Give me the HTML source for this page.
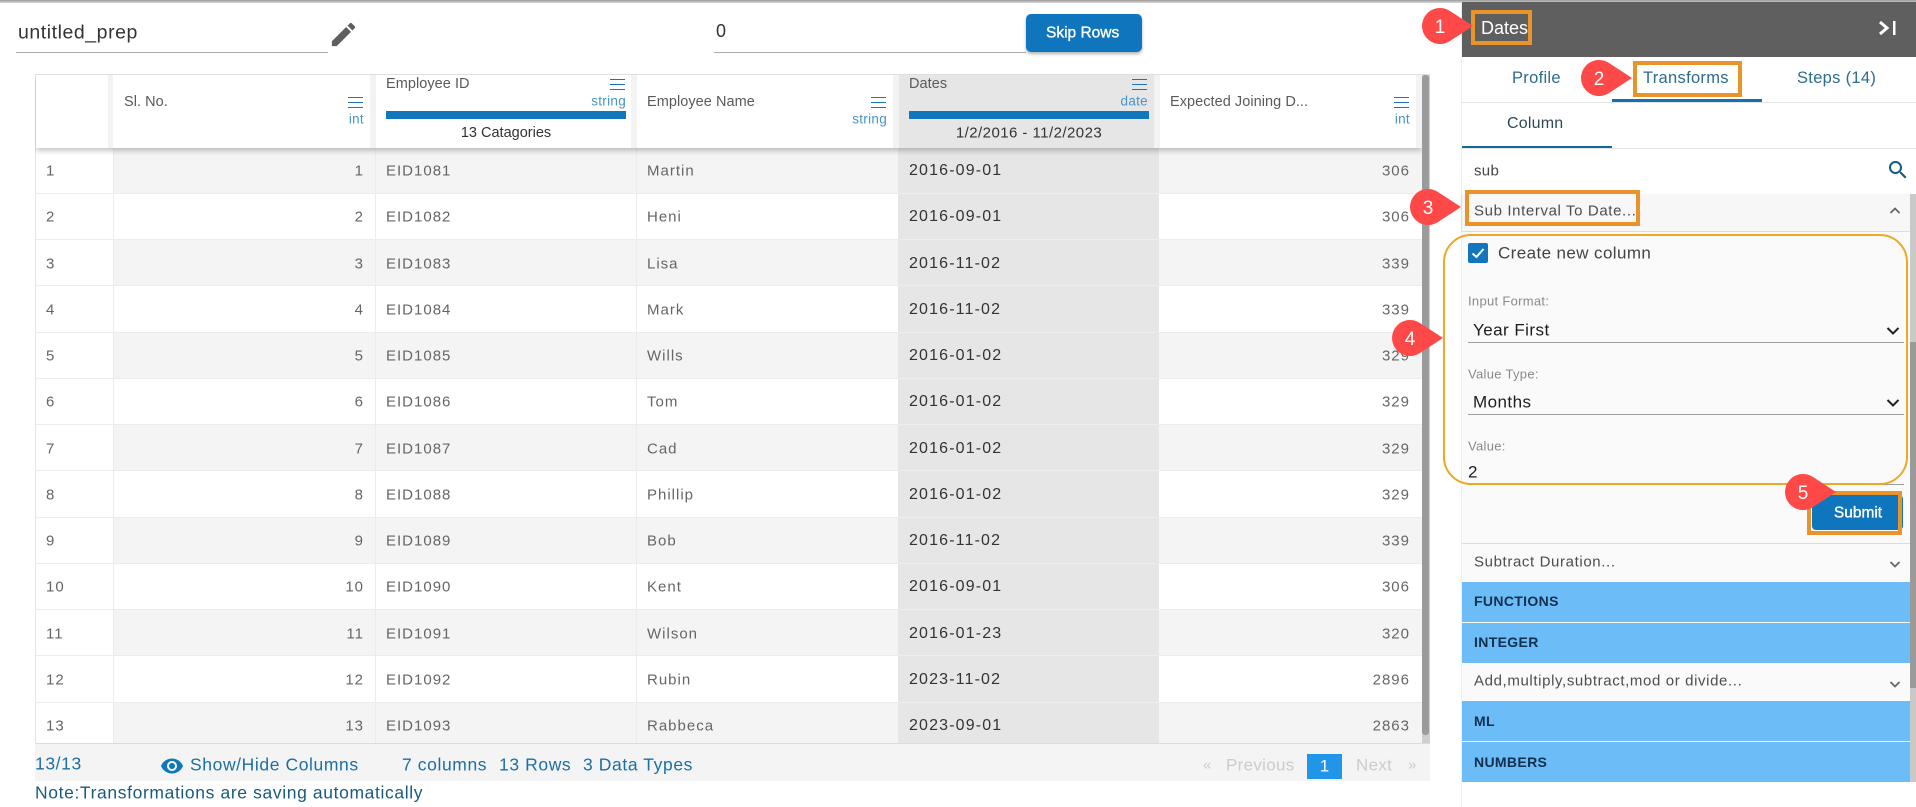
<!DOCTYPE html>
<html lang="en">
<head>
<meta charset="utf-8">
<title>Data Prep</title>
<style>
html,body{margin:0;padding:0;width:1916px;height:807px;overflow:hidden;background:#fff;font-family:"Liberation Sans",sans-serif;color:#666}
div,span,i{position:absolute;display:block;font-style:normal}
.t{white-space:nowrap;transform:translateY(-50%);line-height:1}
.r{left:36px;width:1386px;height:46.25px;box-shadow:inset 0 -1px 0 #ececec}
.o{background:linear-gradient(90deg,#fff 77px,#f4f4f4 77px)}
.r i{top:23.5px;white-space:nowrap;transform:translateY(-50%);line-height:1;font-size:15px;letter-spacing:1px}
.r i.bg{top:0;height:46.25px;transform:none;box-shadow:inset 0 -1px 0 #eeeeee}
.a{left:10px}.b{right:1058px}.c{left:350px}.d{left:611px}.e{left:873px;color:#333;font-size:16px!important;letter-spacing:1.15px!important}.f{right:12px}
.h{font-size:14.5px;color:#5a5a5a;letter-spacing:.05px}
.ty{font-size:13.5px;color:#4b94c6;letter-spacing:.3px}
.m{width:15px;height:9px;border-top:1px solid #1a77b5;border-bottom:1px solid #1a77b5}
.m:after{content:"";position:absolute;left:0;right:0;top:4px;height:1px;background:#1a77b5}
.bar{height:8px;background:#1077bb}
.ft{font-size:17.5px;color:#1c6fa5;letter-spacing:.6px}
.lb{font-size:13px;color:#8a8a8a;letter-spacing:.3px}
.v{font-size:17px;color:#1c1c1c;letter-spacing:.45px}
.ul{height:1px;background:#9c9c9c}
.blue{left:1462px;width:448px;background:#6bbcf7;height:40px}
.bt{left:1474px;font-size:14px;font-weight:bold;color:#12304d;letter-spacing:.35px}
.acc{font-size:15px;color:#4d4d4d;letter-spacing:.62px}
.ob{border:4px solid #e8942a;box-sizing:border-box}
</style>
</head>
<body>
<div style="left:0;top:0;width:1916px;height:3px;background:linear-gradient(#9b9b9b,#d8d8d8)"></div>

<div class="t" style="left:18px;top:33px;font-size:19.5px;color:#333;letter-spacing:.55px">untitled_prep</div>
<div class="ul" style="left:16px;top:52px;width:312px;background:#aaa"></div>
<svg style="position:absolute;left:328px;top:19px" width="31" height="31" viewBox="0 0 24 24"><path fill="#5f5f5f" d="M3 17.25V21h3.75L17.81 9.94l-3.75-3.75L3 17.25zM20.71 7.04c.39-.39.39-1.02 0-1.41l-2.34-2.34c-.39-.39-1.02-.39-1.41 0l-1.83 1.83 3.75 3.75 1.83-1.83z"/></svg>
<div class="t" style="left:716px;top:31px;font-size:18px;color:#333">0</div>
<div class="ul" style="left:714px;top:52px;width:312px;background:#aaa"></div>
<div style="left:1026px;top:14px;width:116px;height:38px;background:#0f76bd;border-radius:5px;box-shadow:0 2px 3px rgba(0,0,0,.3)"></div>
<div class="t" style="left:1046px;top:33px;font-size:15.5px;-webkit-text-stroke:.35px #fff;color:#fff">Skip Rows</div>

<!-- table -->
<div style="left:35px;top:74px;width:1395px;height:670px;overflow:hidden;background:#fff;box-shadow:inset 0 0 0 1px #e4e4e4">
<div style="left:-35px;top:-74px;width:1916px;height:807px">
<div class="r o" style="top:147.5px"><i class="a">1</i><i class="b">1</i><i class="c">EID1081</i><i class="d">Martin</i><i class="bg" style="left:862px;width:261px;background:#e6e6e6"></i><i class="e">2016-09-01</i><i class="f">306</i></div>
<div class="r" style="top:193.75px"><i class="a">2</i><i class="b">2</i><i class="c">EID1082</i><i class="d">Heni</i><i class="bg" style="left:862px;width:261px;background:#e6e6e6"></i><i class="e">2016-09-01</i><i class="f">306</i></div>
<div class="r o" style="top:240px"><i class="a">3</i><i class="b">3</i><i class="c">EID1083</i><i class="d">Lisa</i><i class="bg" style="left:862px;width:261px;background:#e6e6e6"></i><i class="e">2016-11-02</i><i class="f">339</i></div>
<div class="r" style="top:286.25px"><i class="a">4</i><i class="b">4</i><i class="c">EID1084</i><i class="d">Mark</i><i class="bg" style="left:862px;width:261px;background:#e6e6e6"></i><i class="e">2016-11-02</i><i class="f">339</i></div>
<div class="r o" style="top:332.5px"><i class="a">5</i><i class="b">5</i><i class="c">EID1085</i><i class="d">Wills</i><i class="bg" style="left:862px;width:261px;background:#e6e6e6"></i><i class="e">2016-01-02</i><i class="f">329</i></div>
<div class="r" style="top:378.75px"><i class="a">6</i><i class="b">6</i><i class="c">EID1086</i><i class="d">Tom</i><i class="bg" style="left:862px;width:261px;background:#e6e6e6"></i><i class="e">2016-01-02</i><i class="f">329</i></div>
<div class="r o" style="top:425px"><i class="a">7</i><i class="b">7</i><i class="c">EID1087</i><i class="d">Cad</i><i class="bg" style="left:862px;width:261px;background:#e6e6e6"></i><i class="e">2016-01-02</i><i class="f">329</i></div>
<div class="r" style="top:471.25px"><i class="a">8</i><i class="b">8</i><i class="c">EID1088</i><i class="d">Phillip</i><i class="bg" style="left:862px;width:261px;background:#e6e6e6"></i><i class="e">2016-01-02</i><i class="f">329</i></div>
<div class="r o" style="top:517.5px"><i class="a">9</i><i class="b">9</i><i class="c">EID1089</i><i class="d">Bob</i><i class="bg" style="left:862px;width:261px;background:#e6e6e6"></i><i class="e">2016-11-02</i><i class="f">339</i></div>
<div class="r" style="top:563.75px"><i class="a">10</i><i class="b">10</i><i class="c">EID1090</i><i class="d">Kent</i><i class="bg" style="left:862px;width:261px;background:#e6e6e6"></i><i class="e">2016-09-01</i><i class="f">306</i></div>
<div class="r o" style="top:610px"><i class="a">11</i><i class="b">11</i><i class="c">EID1091</i><i class="d">Wilson</i><i class="bg" style="left:862px;width:261px;background:#e6e6e6"></i><i class="e">2016-01-23</i><i class="f">320</i></div>
<div class="r" style="top:656.25px"><i class="a">12</i><i class="b">12</i><i class="c">EID1092</i><i class="d">Rubin</i><i class="bg" style="left:862px;width:261px;background:#e6e6e6"></i><i class="e">2023-11-02</i><i class="f">2896</i></div>
<div class="r o" style="top:702.5px"><i class="a">13</i><i class="b">13</i><i class="c">EID1093</i><i class="d">Rabbeca</i><i class="bg" style="left:862px;width:261px;background:#e6e6e6"></i><i class="e">2023-09-01</i><i class="f">2863</i></div>

<!-- col lines -->
<div style="left:113px;top:148px;width:1px;height:600px;background:#ececec"></div>
<div style="left:375px;top:148px;width:1px;height:600px;background:#ececec"></div>
<div style="left:636px;top:148px;width:1px;height:600px;background:#ececec"></div>

<!-- header -->
<div style="left:36px;top:75px;width:1386px;height:73px;background:#f3f3f3;box-shadow:0 3px 5px rgba(0,0,0,.22)"></div>
<div style="left:36px;top:75px;width:72px;height:73px;background:#fff"></div>
<div style="left:113px;top:75px;width:257px;height:73px;background:#fff"></div>
<div style="left:376px;top:75px;width:255px;height:73px;background:#fff"></div>
<div style="left:637px;top:75px;width:256px;height:73px;background:#fff"></div>
<div style="left:899px;top:75px;width:255px;height:73px;background:#e6e6e6"></div>
<div style="left:1160px;top:75px;width:256px;height:73px;background:#fff"></div>

<div class="t h" style="left:124px;top:102px">Sl. No.</div>
<div class="m" style="left:348px;top:97px"></div>
<div class="t ty" style="right:1552px;top:119px">int</div>

<div class="t h" style="left:386px;top:84px">Employee ID</div>
<div class="m" style="left:610px;top:79px"></div>
<div class="t ty" style="right:1290px;top:101px">string</div>
<div class="bar" style="left:386px;top:111px;width:240px"></div>
<div class="t" style="left:386px;width:240px;text-align:center;top:133px;font-size:14.5px;color:#333">13 Catagories</div>

<div class="t h" style="left:647px;top:102px">Employee Name</div>
<div class="m" style="left:871px;top:97px"></div>
<div class="t ty" style="right:1029px;top:119px">string</div>

<div class="t h" style="left:909px;top:84px">Dates</div>
<div class="m" style="left:1132px;top:79px"></div>
<div class="t ty" style="right:768px;top:101px">date</div>
<div class="bar" style="left:909px;top:111px;width:240px"></div>
<div class="t" style="left:909px;width:240px;text-align:center;top:133px;font-size:15px;letter-spacing:.45px;color:#333">1/2/2016 - 11/2/2023</div>

<div class="t h" style="left:1170px;top:102px">Expected Joining D...</div>
<div class="m" style="left:1394px;top:97px"></div>
<div class="t ty" style="right:506px;top:119px">int</div>

<!-- scrollbar -->
<div style="left:1422px;top:75px;width:8px;height:669px;background:#cfcfcf"></div>
<div style="left:1422px;top:75px;width:7px;height:660px;background:#9b9b9b;border-radius:3px"></div>
</div>
</div>

<!-- footer -->
<div style="left:35px;top:743px;width:1395px;height:38px;background:#f4f4f4;border-top:1px solid #dcdcdc;box-sizing:border-box"></div>
<div class="t ft" style="left:35px;top:764px">13/13</div>
<svg style="position:absolute;left:160px;top:754px" width="24" height="24" viewBox="0 0 24 24"><path fill="#1177bb" d="M12 4.5C7 4.5 2.73 7.61 1 12c1.73 4.39 6 7.5 11 7.5s9.27-3.11 11-7.5c-1.73-4.39-6-7.5-11-7.5zM12 17c-2.76 0-5-2.24-5-5s2.24-5 5-5 5 2.24 5 5-2.24 5-5 5zm0-8c-1.66 0-3 1.34-3 3s1.34 3 3 3 3-1.34 3-3-1.34-3-3-3z"/></svg>
<div class="t ft" style="left:190px;top:765px">Show/Hide Columns</div>
<div class="t ft" style="left:402px;top:765px">7 columns</div>
<div class="t ft" style="left:499px;top:765px">13 Rows</div>
<div class="t ft" style="left:583px;top:765px">3 Data Types</div>
<div class="t" style="left:35px;top:793px;font-size:17.5px;color:#1a5a7e;letter-spacing:.62px">Note:Transformations are saving automatically</div>
<div class="t" style="left:1203px;top:765px;font-size:15px;color:#ccc">«</div>
<div class="t" style="left:1226px;top:765px;font-size:17px;color:#ccc;letter-spacing:.3px">Previous</div>
<div style="left:1307px;top:754px;width:35px;height:25px;background:#2196e8"></div>
<div class="t" style="left:1307px;width:35px;text-align:center;top:766px;font-size:17px;color:#fff">1</div>
<div class="t" style="left:1356px;top:765px;font-size:17px;color:#ccc;letter-spacing:.3px">Next</div>
<div class="t" style="left:1408px;top:765px;font-size:15px;color:#ccc">»</div>

<!-- right panel -->
<div style="left:1462px;top:2px;width:454px;height:805px;background:#fff;box-shadow:-1px 0 0 #eee"></div>
<div style="left:1462px;top:2px;width:454px;height:55px;background:#5f5f5f"></div>
<div class="t" style="left:1481px;top:28px;font-size:18px;color:#fff">Dates</div>
<svg style="position:absolute;left:1876px;top:18px" width="24" height="20" viewBox="0 0 24 20"><path d="M4 4l7 6-7 6" fill="none" stroke="#fff" stroke-width="3"/><rect x="17" y="3" width="2.5" height="14" fill="#fff"/></svg>

<div style="left:1462px;top:102px;width:454px;height:1px;background:#e3e3e3"></div>
<div class="t" style="left:1512px;top:78px;font-size:16.5px;color:#2c6c8f;letter-spacing:.3px">Profile</div>
<div class="t" style="left:1643px;top:78px;font-size:16.5px;color:#2c6c8f;letter-spacing:.3px">Transforms</div>
<div class="t" style="left:1797px;top:78px;font-size:16.5px;color:#2c6c8f;letter-spacing:.3px">Steps (14)</div>
<div style="left:1612px;top:99px;width:150px;height:3px;background:#1272ae"></div>

<div class="t" style="left:1507px;top:124px;font-size:16px;color:#2f4858;letter-spacing:.2px">Column</div>
<div style="left:1462px;top:148px;width:454px;height:1px;background:#e3e3e3"></div>
<div style="left:1462px;top:146px;width:150px;height:2px;background:#146a94"></div>

<div class="t" style="left:1474px;top:171px;font-size:15px;color:#444;letter-spacing:.3px">sub</div>
<svg style="position:absolute;left:1886px;top:158px" width="24" height="24" viewBox="0 0 24 24"><path fill="#14587a" d="M15.5 14h-.79l-.28-.27C15.41 12.59 16 11.11 16 9.5 16 5.91 13.09 3 9.5 3S3 5.91 3 9.5 5.91 16 9.5 16c1.61 0 3.09-.59 4.23-1.57l.27.28v.79l5 4.99L20.49 19l-4.99-5zm-6 0C7.01 14 5 11.99 5 9.5S7.01 5 9.5 5 14 7.01 14 9.5 11.99 14 9.5 14z"/></svg>

<!-- accordion -->
<div style="left:1462px;top:194px;width:448px;height:37px;background:#f7f7f7;box-shadow:0 1px 2px rgba(0,0,0,.2)"></div>
<div class="t acc" style="left:1474px;top:211px">Sub Interval To Date...</div>
<svg style="position:absolute;left:1888px;top:204px" width="14" height="14" viewBox="0 0 14 14"><path d="M2.5 9l4.5-4.5 4.5 4.5" fill="none" stroke="#666" stroke-width="1.8"/></svg>
<div style="left:1462px;top:232px;width:448px;height:311px;background:#fafafa"></div>

<div style="left:1468px;top:243px;width:20px;height:20px;background:#1176bd;border-radius:2px"></div>
<svg style="position:absolute;left:1468px;top:243px" width="20" height="20" viewBox="0 0 20 20"><path d="M4.5 10.5l4 3.5 7-8" fill="none" stroke="#fff" stroke-width="2"/></svg>
<div class="t" style="left:1498px;top:253px;font-size:17px;color:#444;letter-spacing:.4px">Create new column</div>

<div class="t lb" style="left:1468px;top:301px">Input Format:</div>
<div class="t v" style="left:1473px;top:330px">Year First</div>
<div class="ul" style="left:1468px;top:342px;width:436px"></div>
<svg style="position:absolute;left:1885px;top:324px" width="16" height="14" viewBox="0 0 16 14"><path d="M2.5 4l5.5 5.5 5.5-5.5" fill="none" stroke="#222" stroke-width="2"/></svg>

<div class="t lb" style="left:1468px;top:374px">Value Type:</div>
<div class="t v" style="left:1473px;top:402px">Months</div>
<div class="ul" style="left:1468px;top:414px;width:436px"></div>
<svg style="position:absolute;left:1885px;top:396px" width="16" height="14" viewBox="0 0 16 14"><path d="M2.5 4l5.5 5.5 5.5-5.5" fill="none" stroke="#222" stroke-width="2"/></svg>

<div class="t lb" style="left:1468px;top:446px">Value:</div>
<div class="t v" style="left:1468px;top:472px">2</div>
<div class="ul" style="left:1468px;top:484px;width:436px"></div>

<div style="left:1812px;top:495px;width:91px;height:35px;background:#0f76bd;border-radius:4px"></div>
<div class="t" style="left:1813px;width:90px;text-align:center;top:513px;font-size:15.5px;-webkit-text-stroke:.35px #fff;color:#fff">Submit</div>
<div style="left:1462px;top:543px;width:448px;height:1px;background:#dcdcdc"></div>

<div style="left:1462px;top:544px;width:448px;height:37px;background:#fafafa"></div>
<div class="t acc" style="left:1474px;top:562px">Subtract Duration...</div>
<svg style="position:absolute;left:1888px;top:557px" width="14" height="14" viewBox="0 0 14 14"><path d="M2.5 5l4.5 4.5 4.5-4.5" fill="none" stroke="#666" stroke-width="1.8"/></svg>

<div class="blue" style="top:582px"></div>
<div class="t bt" style="top:601px">FUNCTIONS</div>
<div class="blue" style="top:623px"></div>
<div class="t bt" style="top:642px">INTEGER</div>
<div style="left:1462px;top:664px;width:448px;height:36px;background:#fafafa"></div>
<div class="t acc" style="left:1474px;top:681px">Add,multiply,subtract,mod or divide...</div>
<svg style="position:absolute;left:1888px;top:677px" width="14" height="14" viewBox="0 0 14 14"><path d="M2.5 5l4.5 4.5 4.5-4.5" fill="none" stroke="#666" stroke-width="1.8"/></svg>
<div class="blue" style="top:701px"></div>
<div class="t bt" style="top:721px">ML</div>
<div class="blue" style="top:742px"></div>
<div class="t bt" style="top:762px">NUMBERS</div>

<div style="left:1910px;top:194px;width:6px;height:588px;background:#c9c9c9"></div>
<div style="left:1910px;top:342px;width:6px;height:346px;background:#9a9a9a"></div>

<!-- annotations -->
<div class="ob" style="left:1471px;top:10px;width:61px;height:35px"></div>
<div class="ob" style="left:1633px;top:61px;width:109px;height:36px"></div>
<div class="ob" style="left:1465px;top:190px;width:175px;height:36px"></div>
<div class="ob" style="left:1807px;top:491px;width:95px;height:44px"></div>
<div style="left:1443px;top:234px;width:465px;height:251px;box-sizing:border-box;border:2px solid #eea825;border-radius:28px"></div>

<svg style="position:absolute;left:0;top:0" width="1916" height="807" viewBox="0 0 1916 807" font-family="Liberation Sans, sans-serif" font-size="19" fill="#fff" text-anchor="middle">
<g transform="translate(1440 26)"><path fill="#ff4848" d="M33 0L9.8-15.1A18 18 0 1 0 9.8 15.1Z"/><text y="7">1</text></g>
<g transform="translate(1599 78)"><path fill="#ff4848" d="M33 0L9.8-15.1A18 18 0 1 0 9.8 15.1Z"/><text y="7">2</text></g>
<g transform="translate(1428 207)"><path fill="#ff4848" d="M33 0L9.8-15.1A18 18 0 1 0 9.8 15.1Z"/><text y="7">3</text></g>
<g transform="translate(1410 338)"><path fill="#ff4848" d="M33 0L9.8-15.1A18 18 0 1 0 9.8 15.1Z"/><text y="7">4</text></g>
<g transform="translate(1803 492)"><path fill="#ff4848" d="M33 0L9.8-15.1A18 18 0 1 0 9.8 15.1Z"/><text y="7">5</text></g>
</svg>
</body>
</html>
